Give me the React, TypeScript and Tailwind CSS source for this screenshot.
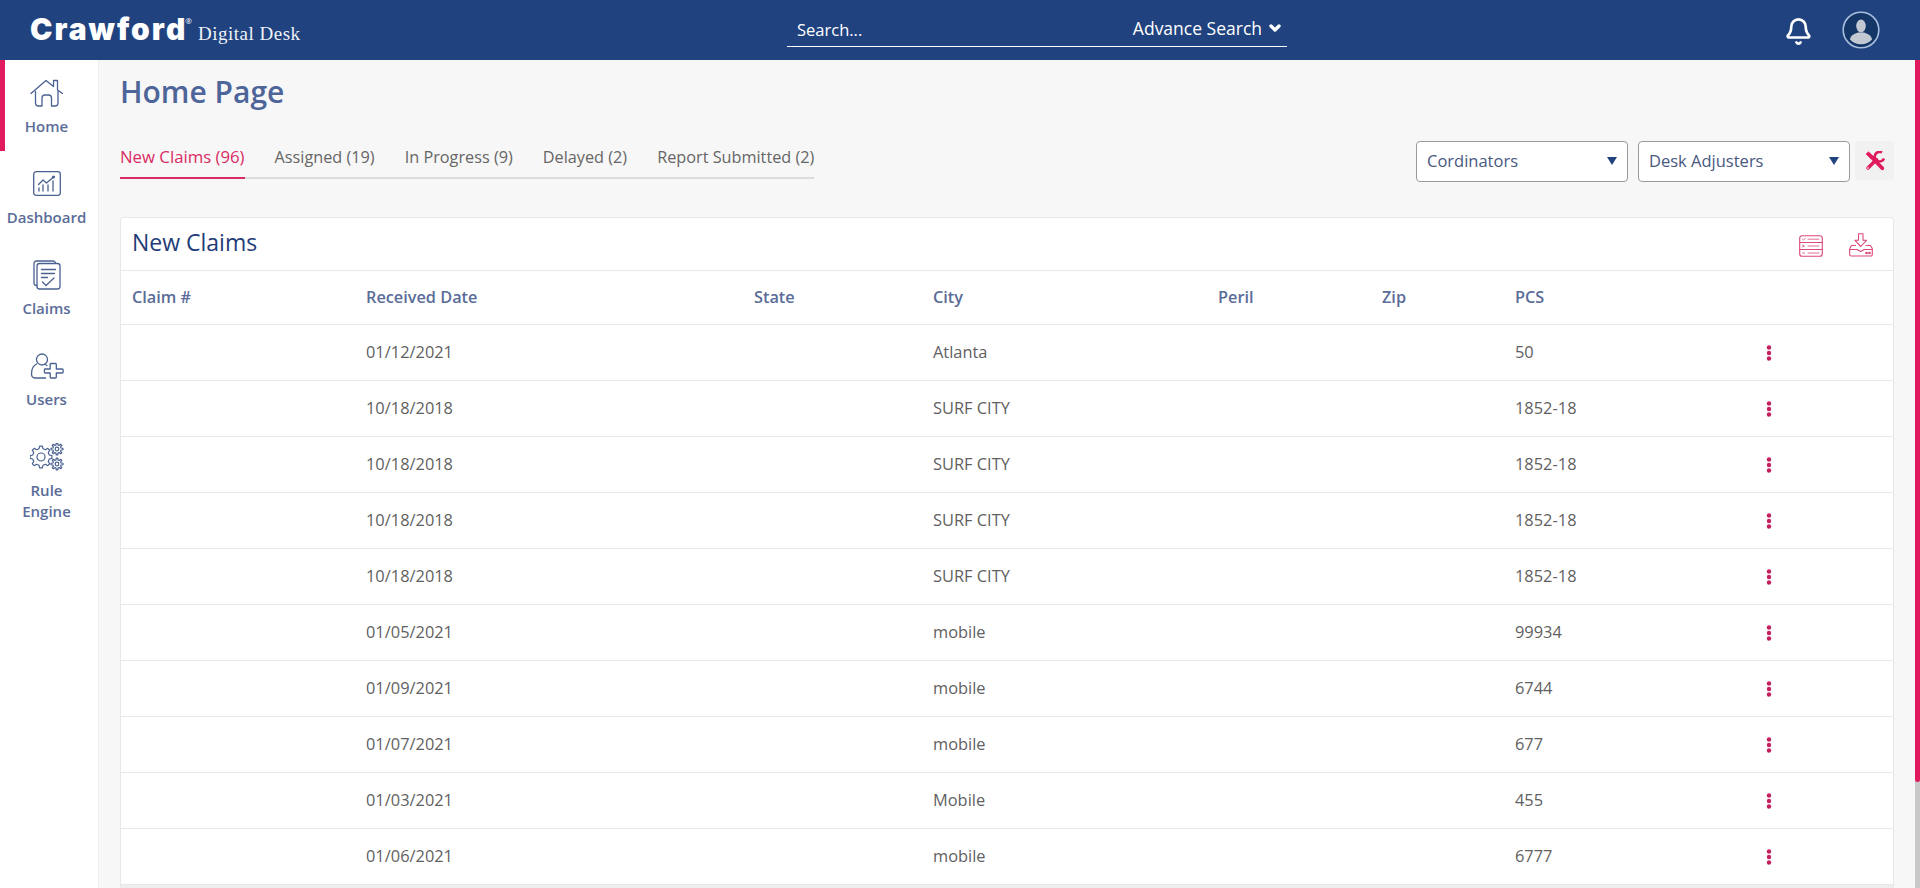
import { Bell, ChevronDown } from "lucide-react";

const rows = [
  ["01/12/2021", "Atlanta", "50"],
  ["10/18/2018", "SURF CITY", "1852-18"],
  ["10/18/2018", "SURF CITY", "1852-18"],
  ["10/18/2018", "SURF CITY", "1852-18"],
  ["10/18/2018", "SURF CITY", "1852-18"],
  ["01/05/2021", "mobile", "99934"],
  ["01/09/2021", "mobile", "6744"],
  ["01/07/2021", "mobile", "677"],
  ["01/03/2021", "Mobile", "455"],
  ["01/06/2021", "mobile", "6777"],
];

const tabs = ["Assigned (19)", "In Progress (9)", "Delayed (2)", "Report Submitted (2)"];

const gridCols = "grid grid-cols-[234px_388px_179px_285px_164px_133px_251px_1fr] items-center pl-3";

// outline gear, drawn from its tooth count
function gearPath(cx: number, cy: number, r1: number, r2: number, n: number) {
  const pts: string[] = [];
  for (let i = 0; i < n; i++) {
    const a = (i / n) * Math.PI * 2;
    const s = (Math.PI * 2) / n;
    const at = (r: number, t: number) =>
      `${(cx + r * Math.cos(t)).toFixed(2)} ${(cy + r * Math.sin(t)).toFixed(2)}`;
    pts.push(`${i === 0 ? "M" : "L"}${at(r1, a - s * 0.3)}`);
    pts.push(`L${at(r2, a - s * 0.16)}`);
    pts.push(`L${at(r2, a + s * 0.16)}`);
    pts.push(`L${at(r1, a + s * 0.3)}`);
  }
  return pts.join(" ") + " Z";
}

function HomeIcon() {
  return (
    <svg width="34" height="28" viewBox="0 0 34 28" fill="none" stroke="#4a6191" strokeWidth="1.3" strokeLinejoin="round" strokeLinecap="round">
      <path d="M1 14.500 16 1.500l7.500 6V1.500h4v9.500l5 3.500" />
      <path d="M5.500 12.500V24a3 3 0 0 0 3 3h3.500v-8a3 3 0 0 1 3-3h3.500a3 3 0 0 1 3 3v8h3.500a3 3 0 0 0 3-3V12.500" />
    </svg>
  );
}

function DashboardIcon() {
  return (
    <svg width="28" height="25" viewBox="0 0 28 25" fill="none" stroke="#4a6191" strokeWidth="1.3" strokeLinecap="round" strokeLinejoin="round">
      <rect x="0.700" y="0.700" width="26.600" height="23.600" rx="2.500" />
      <path d="M6 20v-3M10 20v-6M15 20v-6M20 20V10" />
      <path d="M5.500 13.500 10 9l3.500 3L20 6.500" />
      <circle cx="20.500" cy="6" r="0.900" fill="#4a6191" />
    </svg>
  );
}

function ClaimsIcon() {
  return (
    <svg width="28" height="30" viewBox="0 0 28 30" fill="none" stroke="#4a6191" strokeWidth="1.3" strokeLinecap="round" strokeLinejoin="round">
      <path d="M4 25.500H3.500A2.500 2.500 0 0 1 1 23V3.500A2.500 2.500 0 0 1 3.500 1H20a2.500 2.500 0 0 1 2.500 2" />
      <rect x="4" y="3.500" width="23" height="25.500" rx="2.500" />
      <path d="M8.500 9.500h14M8.500 13.500h13M8.500 17.500h6" />
      <path d="M9.500 22l3.500 3.500 8-7.500" />
    </svg>
  );
}

function UsersIcon() {
  return (
    <svg width="34" height="26" viewBox="0 0 34 26" fill="none" stroke="#4a6191" strokeWidth="1.3" strokeLinecap="round" strokeLinejoin="round">
      <circle cx="12" cy="6.500" r="5.500" />
      <path d="M6.500 11c-3 1.500-5 4-5 9.500 0 3 1.500 4.500 3.500 4.500h10.500" />
      <path d="M17 12.500c-1-.6-2-1.200-2.500-1.300" />
      <path d="M21 10.500h4.500a0.800 0.800 0 0 1 .8.800v4.700h6a0.800 0.800 0 0 1 .8.800v2.400a0.800 0.800 0 0 1-.8.800h-6v4.200a0.800 0.800 0 0 1-.8.800H21a0.800 0.800 0 0 1-.8-.8v-4.200h-5a0.800 0.800 0 0 1-.8-.8v-2.400a0.800 0.800 0 0 1 .8-.8h5v-4.700a0.800 0.800 0 0 1 .8-.8z" />
    </svg>
  );
}

function RuleIcon() {
  return (
    <svg width="34" height="28" viewBox="0 0 34 28" fill="none" stroke="#4a6191" strokeWidth="1.2" strokeLinejoin="round">
      <path d={gearPath(11, 14, 8.500, 11, 8)} />
      <circle cx="11" cy="14" r="4" />
      <path d={gearPath(27, 6, 4.200, 6, 8)} />
      <circle cx="27" cy="6" r="1.800" />
      <path d={gearPath(27, 21, 4.200, 6, 8)} />
      <circle cx="27" cy="21" r="1.800" />
    </svg>
  );
}

function ToolsIcon() {
  return (
    <svg width="20" height="20" viewBox="0 0 20 20" fill="none" stroke="#e01a5e">
      <path d="M1 3 3.500 0.800 8.500 5.500 6 8z" fill="#e01a5e" strokeWidth="0.600" strokeLinejoin="round" />
      <path d="M7 6.500 17.300 17.300" strokeWidth="3.800" strokeLinecap="round" />
      <path d="M3 17 11.500 8.500" strokeWidth="3.400" strokeLinecap="round" />
      <path d="M17 1.500A4.800 4.800 0 1 0 19 7.500" strokeWidth="2.600" />
      <circle cx="3" cy="17" r="0.800" fill="#ffffff" stroke="none" />
    </svg>
  );
}

function ListIcon() {
  return (
    <svg width="24" height="22" viewBox="0 0 24 22" fill="none" stroke="#dc4a78" strokeWidth="1.100" strokeLinecap="round" strokeLinejoin="round">
      <rect x="0.700" y="0.700" width="22.600" height="20.600" rx="2.500" />
      <path d="M0.700 7.500h22.600M0.700 14.500h22.600" />
      <path d="M3.500 4.200l1 1 2-2M9 4.200h11M9 11h11M3.500 10l2 1-2 1M3.500 18h2M9 18h11" strokeWidth="0.800" />
    </svg>
  );
}

function DownloadIcon() {
  return (
    <svg width="24" height="24" viewBox="0 0 24 24" fill="none" stroke="#dc4a78" strokeWidth="1.100" strokeLinecap="round" strokeLinejoin="round">
      <path d="M9.500 0.800h4.500v6.500h3.500L11.800 13.500 6 7.300h3.500z" />
      <path d="M6.500 12.500H2.500L0.700 15.500v6a1.500 1.500 0 0 0 1.500 1.500h19.600a1.500 1.500 0 0 0 1.500-1.500v-6L21.500 12.500H17" />
      <path d="M0.700 16.500h7.500l3.500 2 3.500-2h8.100" />
      <circle cx="17.500" cy="20" r="0.800" fill="#dc4a78" />
      <circle cx="20.500" cy="20" r="0.800" fill="#dc4a78" />
    </svg>
  );
}

function AvatarIcon() {
  return (
    <svg width="38" height="38" viewBox="0 0 38 38">
      <circle cx="19" cy="19" r="17.800" fill="#153768" stroke="#a9bfdd" strokeWidth="1.600" />
      <ellipse cx="19" cy="15" rx="4.800" ry="6.500" fill="#c3c9d3" />
      <path d="M8 28.500c.5-4.500 5-6 8-7h6c3 1 7.500 2.500 8 7-2.500 3-6.500 4.800-11 4.800S10.500 31.500 8 28.500z" fill="#c3c9d3" />
    </svg>
  );
}

function Caret() {
  return (
    <svg width="10" height="8" viewBox="0 0 10 8">
      <polygon points="0,0 10,0 5,8" fill="#20437f" />
    </svg>
  );
}

function Dots() {
  return (
    <svg width="6" height="16" viewBox="0 0 6 16" fill="#c4205f">
      <circle cx="3" cy="2.500" r="2.200" />
      <circle cx="3" cy="8" r="2.200" />
      <circle cx="3" cy="13.500" r="2.200" />
    </svg>
  );
}

function NavItem({ label, icon, active, h }: { label: string; icon: React.ReactNode; active?: boolean; h: string }) {
  return (
    <div className={`flex flex-col items-center ${h} pt-[17px] border-l-[5px] ${active ? "border-[#e01a5e]" : "border-transparent"}`}>
      <div className="h-[31px] flex items-center -ml-[10px]">{icon}</div>
      <div className="-ml-[10px] mt-[8px] w-min text-center text-[15px] leading-[21px] font-semibold text-[#5a6c98]">{label}</div>
    </div>
  );
}

export default function App() {
  return (
    <div className="h-[888px] overflow-hidden flex flex-col bg-[#f7f7f7] font-['Open_Sans',sans-serif]">
      {/* top bar */}
      <header className="h-[60px] shrink-0 bg-[#20437f] flex text-white">
        <div className="w-[787px] shrink-0 pl-[30px] pt-[11px] flex items-start">
          <span className="font-['Inter',sans-serif] font-black text-[30px] leading-[36px] tracking-[2px]">Crawford</span>
          <span className="text-[8px] leading-[14px] mt-[3px] -ml-[2px]">®</span>
          <span className="font-['Liberation_Serif',serif] text-[19px] leading-[26px] tracking-[0.5px] ml-[6px] mt-[10px] text-[#eef2f8]">Digital Desk</span>
        </div>
        <div className="w-[500px] h-[47px] border-b border-white flex items-end justify-between pl-[10px] pr-[4px] pb-[4px]">
          <span className="text-[16.5px] leading-[24px]">Search...</span>
          <span className="flex items-center gap-[5px] text-[17.5px] leading-[26px] mb-[1px]">
            Advance Search
            <ChevronDown size={16} strokeWidth={5} />
          </span>
        </div>
        <div className="flex-1 flex items-center justify-end pr-[40px] gap-[29px]">
          <Bell size={29} strokeWidth={2.200} className="mt-[2px]" />
          <AvatarIcon />
        </div>
      </header>

      <div className="flex-1 flex min-h-0">
        {/* side nav */}
        <nav className="w-[99px] shrink-0 bg-white border-r border-[#efefef]">
          <NavItem h="h-[91px]" label="Home" icon={<HomeIcon />} active />
          <NavItem h="h-[91px]" label="Dashboard" icon={<DashboardIcon />} />
          <NavItem h="h-[91px]" label="Claims" icon={<ClaimsIcon />} />
          <NavItem h="h-[91px]" label="Users" icon={<UsersIcon />} />
          <NavItem h="h-[110px]" label="Rule Engine" icon={<RuleIcon />} />
        </nav>

        <main className="flex-1 min-w-0 px-[21px]">
          <h1 className="pt-[13px] text-[30px] leading-[38px] font-semibold text-[#4d6599]">Home Page</h1>

          <div className="mt-[30px] mb-[35px] h-[41px] flex justify-between">
            <div className="self-start flex gap-[30px] h-[38px] border-b-2 border-[#dcdcdc]">
              <div className="h-[38px] pt-[4px] text-[16.75px] leading-[24px] font-medium text-[#d92a63] border-b-2 border-[#d92a63]">New Claims (96)</div>
              {tabs.map((t) => (
                <div key={t} className="pt-[4px] text-[16.25px] leading-[24px] text-[#666666]">{t}</div>
              ))}
            </div>
            <div className="flex gap-[10px]">
              {["Cordinators", "Desk Adjusters"].map((s) => (
                <div key={s} className="w-[212px] h-[41px] bg-white border border-[#9a9a9a] rounded-[4px] flex items-center justify-between pl-[10px] pr-[10px] pb-[1px] text-[16.5px] text-[#48587f]">
                  {s}
                  <Caret />
                </div>
              ))}
              <div className="w-[39px] h-[39px] -ml-[5px] rounded-[4px] bg-[#f1f1f1] flex items-center justify-center">
                <ToolsIcon />
              </div>
            </div>
          </div>

          {/* claims table */}
          <section className="bg-white border border-[#e8e8e8] border-b-0 rounded-t-[4px]">
            <div className="h-[53px] flex items-center justify-between pl-[11px] pr-[20px] border-b border-[#e8e8e8]">
              <h2 className="text-[23px] leading-[30px] font-medium pb-[4px] text-[#1f3c78]">New Claims</h2>
              <div className="self-start mt-[15px] flex items-start gap-[26px]">
                <div className="mt-[2px]"><ListIcon /></div>
                <DownloadIcon />
              </div>
            </div>
            <div className={`${gridCols} -ml-px h-[54px] pb-[1px] border-b border-[#e8e8e8] text-[16.3px] font-semibold text-[#5a6c98]`}>
              <div>Claim #</div>
              <div>Received Date</div>
              <div>State</div>
              <div>City</div>
              <div>Peril</div>
              <div>Zip</div>
              <div>PCS</div>
              <div />
            </div>
            {rows.map((r, i) => (
              <div key={i} className={`${gridCols} -ml-px h-[56px] border-b border-[#e8e8e8] text-[16.4px] text-[#5f5f5f]`}>
                <div />
                <div>{r[0]}</div>
                <div />
                <div>{r[1]}</div>
                <div />
                <div />
                <div>{r[2]}</div>
                <div className="flex"><Dots /></div>
              </div>
            ))}
            <div className="h-[4px] bg-[#eeeeee]" />
          </section>
        </main>

        {/* page scrollbar */}
        <div className="w-[5px] shrink-0 flex flex-col bg-[#c9c9c9]">
          <div className="h-[722px] bg-[#e01a5e] rounded-b-[3px]" />
        </div>
      </div>
    </div>
  );
}
